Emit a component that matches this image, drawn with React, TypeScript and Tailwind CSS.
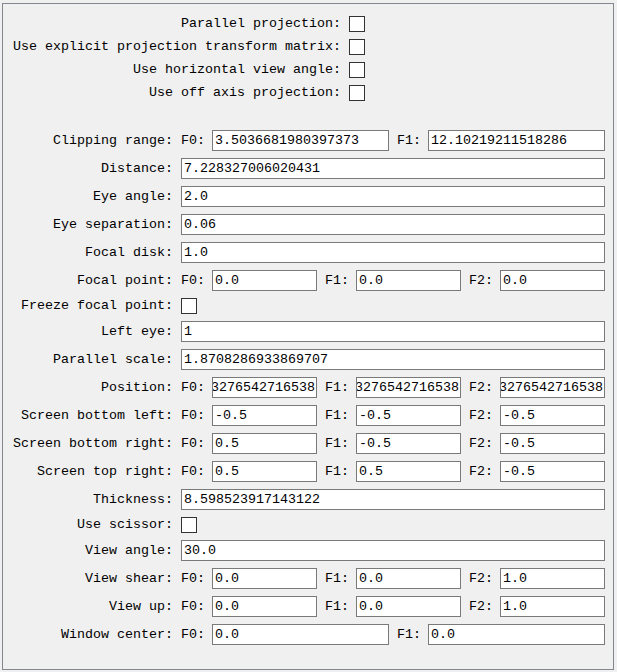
import React from "react";

const font = { fontFamily: '"Liberation Mono", "DejaVu Sans Mono", monospace' };

function Box({ text, right = false }: { text: string; right?: boolean }) {
  return (
    <div
      className={
        "h-[21px] flex-1 min-w-0 bg-white border border-[#7a7a7a] flex items-center overflow-hidden whitespace-nowrap " +
        (right ? "justify-end pr-[1px]" : "pl-[2px]")
      }
    >
      <span className="shrink-0">{text}</span>
    </div>
  );
}

function Check() {
  return <div className="w-[16px] h-[16px] bg-white border border-[#333333]" />;
}

function Field({ label, text, right }: { label: string; text: string; right?: boolean }) {
  return (
    <div className="flex-1 min-w-0 flex items-center gap-[7px]">
      <span className="w-[24px] shrink-0">{label}</span>
      <Box text={text} right={right} />
    </div>
  );
}

type Row =
  | { label: string; kind: "one"; v: string }
  | { label: string; kind: "two"; v: [string, string] }
  | { label: string; kind: "three"; v: [string, string, string]; right?: boolean }
  | { label: string; kind: "check" };

const rows: Row[] = [
  { label: "Clipping range:", kind: "two", v: ["3.5036681980397373", "12.10219211518286"] },
  { label: "Distance:", kind: "one", v: "7.228327006020431" },
  { label: "Eye angle:", kind: "one", v: "2.0" },
  { label: "Eye separation:", kind: "one", v: "0.06" },
  { label: "Focal disk:", kind: "one", v: "1.0" },
  { label: "Focal point:", kind: "three", v: ["0.0", "0.0", "0.0"] },
  { label: "Freeze focal point:", kind: "check" },
  { label: "Left eye:", kind: "one", v: "1" },
  { label: "Parallel scale:", kind: "one", v: "1.8708286933869707" },
  {
    label: "Position:",
    kind: "three",
    v: ["3276542716538", "3276542716538", "3276542716538"],
    right: true,
  },
  { label: "Screen bottom left:", kind: "three", v: ["-0.5", "-0.5", "-0.5"] },
  { label: "Screen bottom right:", kind: "three", v: ["0.5", "-0.5", "-0.5"] },
  { label: "Screen top right:", kind: "three", v: ["0.5", "0.5", "-0.5"] },
  { label: "Thickness:", kind: "one", v: "8.598523917143122" },
  { label: "Use scissor:", kind: "check" },
  { label: "View angle:", kind: "one", v: "30.0" },
  { label: "View shear:", kind: "three", v: ["0.0", "0.0", "1.0"] },
  { label: "View up:", kind: "three", v: ["0.0", "0.0", "1.0"] },
  { label: "Window center:", kind: "two", v: ["0.0", "0.0"] },
];

const topRows = [
  "Parallel projection:",
  "Use explicit projection transform matrix:",
  "Use horizontal view angle:",
  "Use off axis projection:",
];

export default function App() {
  return (
    <div className="w-[617px] h-[672px] bg-[#f0f0f0] pt-[3px] pl-[2px] text-black text-[13.333px] leading-none" style={font}>
      <div className="w-[612px] h-[667px] border border-[#828790] pt-[8px]">
        <div className="grid grid-cols-[auto_16px] gap-x-[8px] pl-[10px] w-max">
          {topRows.map((t) => (
            <React.Fragment key={t}>
              <div className="h-[23px] flex items-center justify-end whitespace-nowrap">{t}</div>
              <div className="h-[23px] flex items-center">
                <Check />
              </div>
            </React.Fragment>
          ))}
        </div>
        <div className="mt-[26px] grid grid-cols-[170px_424px] gap-x-[8px] gap-y-[7px]">
          {rows.map((r) => (
            <React.Fragment key={r.label}>
              <div className={"flex items-center justify-end whitespace-nowrap " + (r.kind === "check" ? "h-[16px]" : "h-[21px]")}>
                {r.label}
              </div>
              {r.kind === "one" && (
                <div className="flex">
                  <Box text={r.v} />
                </div>
              )}
              {r.kind === "two" && (
                <div className="flex gap-[8px]">
                  <Field label="F0:" text={r.v[0]} />
                  <Field label="F1:" text={r.v[1]} />
                </div>
              )}
              {r.kind === "three" && (
                <div className="flex gap-[8px]">
                  <Field label="F0:" text={r.v[0]} right={r.right} />
                  <Field label="F1:" text={r.v[1]} right={r.right} />
                  <Field label="F2:" text={r.v[2]} right={r.right} />
                </div>
              )}
              {r.kind === "check" && (
                <div className="h-[16px] flex items-center">
                  <Check />
                </div>
              )}
            </React.Fragment>
          ))}
        </div>
      </div>
    </div>
  );
}
